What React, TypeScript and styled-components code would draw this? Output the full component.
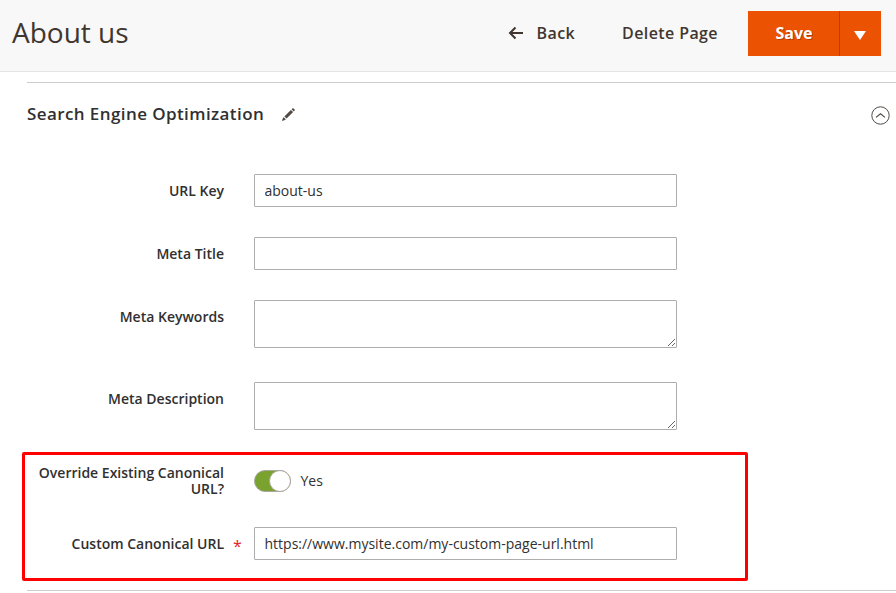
import React from "react";
import styled, { createGlobalStyle } from "styled-components";

const GlobalStyle = createGlobalStyle`
  *, *::before, *::after { box-sizing: border-box; }
  body {
    margin: 0;
    background: #fff;
    color: #303030;
    font: 400 14px/16px "Open Sans", "Helvetica Neue", Helvetica, Arial, sans-serif;
    overflow: hidden;
  }
`;

const Page = styled.div`
  width: 896px;
  height: 593px;
  overflow: hidden;
`;

const Header = styled.header`
  display: flex;
  align-items: flex-start;
  justify-content: space-between;
  height: 72px;
  padding: 11px 15px 0 12px;
  background: #f8f8f8;
  border-bottom: 1px solid #e3e3e3;
`;

const Title = styled.h1`
  margin: 0;
  font-size: 28px;
  font-weight: 400;
  line-height: 42px;
  color: #41362f;
`;

const Actions = styled.div`
  display: flex;
  align-items: center;
  height: 45px;
`;

const TextButton = styled.button<{ $gap: number }>`
  display: flex;
  align-items: center;
  gap: 14px;
  margin: 0 ${(p) => p.$gap}px 0 0;
  padding: 0 0 2px;
  border: 0;
  background: none;
  color: #41362f;
  font: 600 16px/22px "Open Sans", sans-serif;
  letter-spacing: 0.4px;
`;

const SaveButton = styled.button`
  width: 91px;
  height: 45px;
  padding: 0 0 2px 1px;
  border: 0;
  background: #eb5202;
  color: #fff;
  font: 700 16px/22px "Open Sans", sans-serif;
  letter-spacing: 0;
  text-shadow: 1px 1px 0 rgba(0, 0, 0, 0.25);
`;

const SaveToggle = styled.button`
  display: flex;
  align-items: center;
  justify-content: center;
  width: 42px;
  height: 45px;
  padding: 3px 2px 0 0;
  border: 0;
  border-left: 1px solid #b84002;
  background: #eb5202;
`;

const Section = styled.section`
  height: 509px;
  margin: 10px 0 0 27px;
  border: solid #ccc;
  border-width: 1px 0;
`;

const SectionHeader = styled.div`
  display: flex;
  align-items: center;
  height: 63px;
  padding-right: 6px;
`;

const SectionTitle = styled.h2`
  margin: 0 16.5px 2px 0;
  font-size: 17px;
  font-weight: 600;
  line-height: 24px;
  letter-spacing: 0.41px;
`;

const CollapseIcon = styled.svg`
  margin: 1px 0 0 auto;
`;

const Fields = styled.div`
  padding-top: 28px;
`;

const Row = styled.div<{ $space: number }>`
  display: grid;
  grid-template-columns: 197px 423px;
  column-gap: 30px;
  margin-bottom: ${(p) => p.$space}px;
`;

const Label = styled.label<{ $double?: boolean }>`
  position: relative;
  margin-top: ${(p) => (p.$double ? -5 : 9)}px;
  font-weight: 600;
  line-height: 16px;
  text-align: right;
`;

const Required = styled.span`
  position: absolute;
  left: 206px;
  top: 2px;
  color: #e22626;
  font-size: 16px;
  font-weight: 400;
`;

const Input = styled.input`
  width: 100%;
  height: 33px;
  padding: 0 10px 0 9.5px;
  border: 1px solid #adadad;
  border-radius: 1px;
  background: #fff;
  color: #303030;
  font: 400 14px/19px "Open Sans", sans-serif;
  outline: 0;
`;

const TextArea = styled.textarea`
  display: block;
  width: 100%;
  height: 48px;
  padding: 6px 10px;
  border: 1px solid #adadad;
  border-radius: 1px;
  background: #fff;
  font: 400 14px/19px "Open Sans", sans-serif;
  resize: vertical;
  outline: 0;
`;

const Switch = styled.div`
  display: flex;
  align-items: center;
  gap: 9.5px;
  height: 22px;
`;

const Track = styled.span`
  display: flex;
  justify-content: flex-end;
  width: 37px;
  height: 22px;
  border: 1px solid #aaa6a0;
  border-radius: 11px;
  background: #79a22e;
`;

const Knob = styled.span`
  width: 22px;
  height: 22px;
  margin: -1px;
  border: 1px solid #aaa6a0;
  border-radius: 50%;
  background: #fff;
`;

const Highlight = styled.div`
  width: 726px;
  height: 129px;
  margin-left: -5px;
  padding: 15px 0 0 2px;
  border: 3px solid #f00;
  border-radius: 2px;
`;

export default function App() {
  return (
    <Page>
      <GlobalStyle />
      <Header>
        <Title>About us</Title>
        <Actions>
          <TextButton $gap={47}>
            <svg width="15" height="14" viewBox="0 0 15 14" fill="none" stroke="#41362f" strokeWidth="2">
              <path d="M7.5 1.5 2 7l5.5 5.5M2 7h13" />
            </svg>
            Back
          </TextButton>
          <TextButton $gap={30}>Delete Page</TextButton>
          <SaveButton>Save</SaveButton>
          <SaveToggle aria-label="More save options">
            <svg width="12" height="9" viewBox="0 0 12 9">
              <path d="M0 0h12L6 9Z" fill="#fff" />
            </svg>
          </SaveToggle>
        </Actions>
      </Header>
      <Section>
        <SectionHeader>
          <SectionTitle>Search Engine Optimization</SectionTitle>
          <svg width="15" height="15" viewBox="0 0 15 15" fill="#514943">
            <path d="M1 14l.9-3 .8-.8 2.1 2.1-.8.8ZM3.4 9.4l6.5-6.5 2.2 2.2-6.5 6.5ZM10.6 2.2l.8-.8q.6-.5 1.2 0l1 1q.5.6 0 1.2l-.8.8Z" />
          </svg>
          <CollapseIcon width="19" height="19" viewBox="0 0 19 19" fill="none" stroke="#514943">
            <circle cx="9.5" cy="9.5" r="8.7" />
            <path d="M5 11.4 9.5 7.7 14 11.4" strokeWidth="1.2" />
          </CollapseIcon>
        </SectionHeader>
        <Fields>
          <Row $space={30}>
            <Label>URL Key</Label>
            <Input defaultValue="about-us" />
          </Row>
          <Row $space={30}>
            <Label>Meta Title</Label>
            <Input />
          </Row>
          <Row $space={34}>
            <Label>Meta Keywords</Label>
            <TextArea />
          </Row>
          <Row $space={22}>
            <Label>Meta Description</Label>
            <TextArea />
          </Row>
          <Highlight>
            <Row $space={30}>
              <Label $double>Override Existing Canonical URL?</Label>
              <Switch>
                <Track>
                  <Knob />
                </Track>
                Yes
              </Switch>
            </Row>
            <Row $space={0}>
              <Label>
                Custom Canonical URL<Required>*</Required>
              </Label>
              <Input defaultValue="https://www.mysite.com/my-custom-page-url.html" />
            </Row>
          </Highlight>
        </Fields>
      </Section>
    </Page>
  );
}
